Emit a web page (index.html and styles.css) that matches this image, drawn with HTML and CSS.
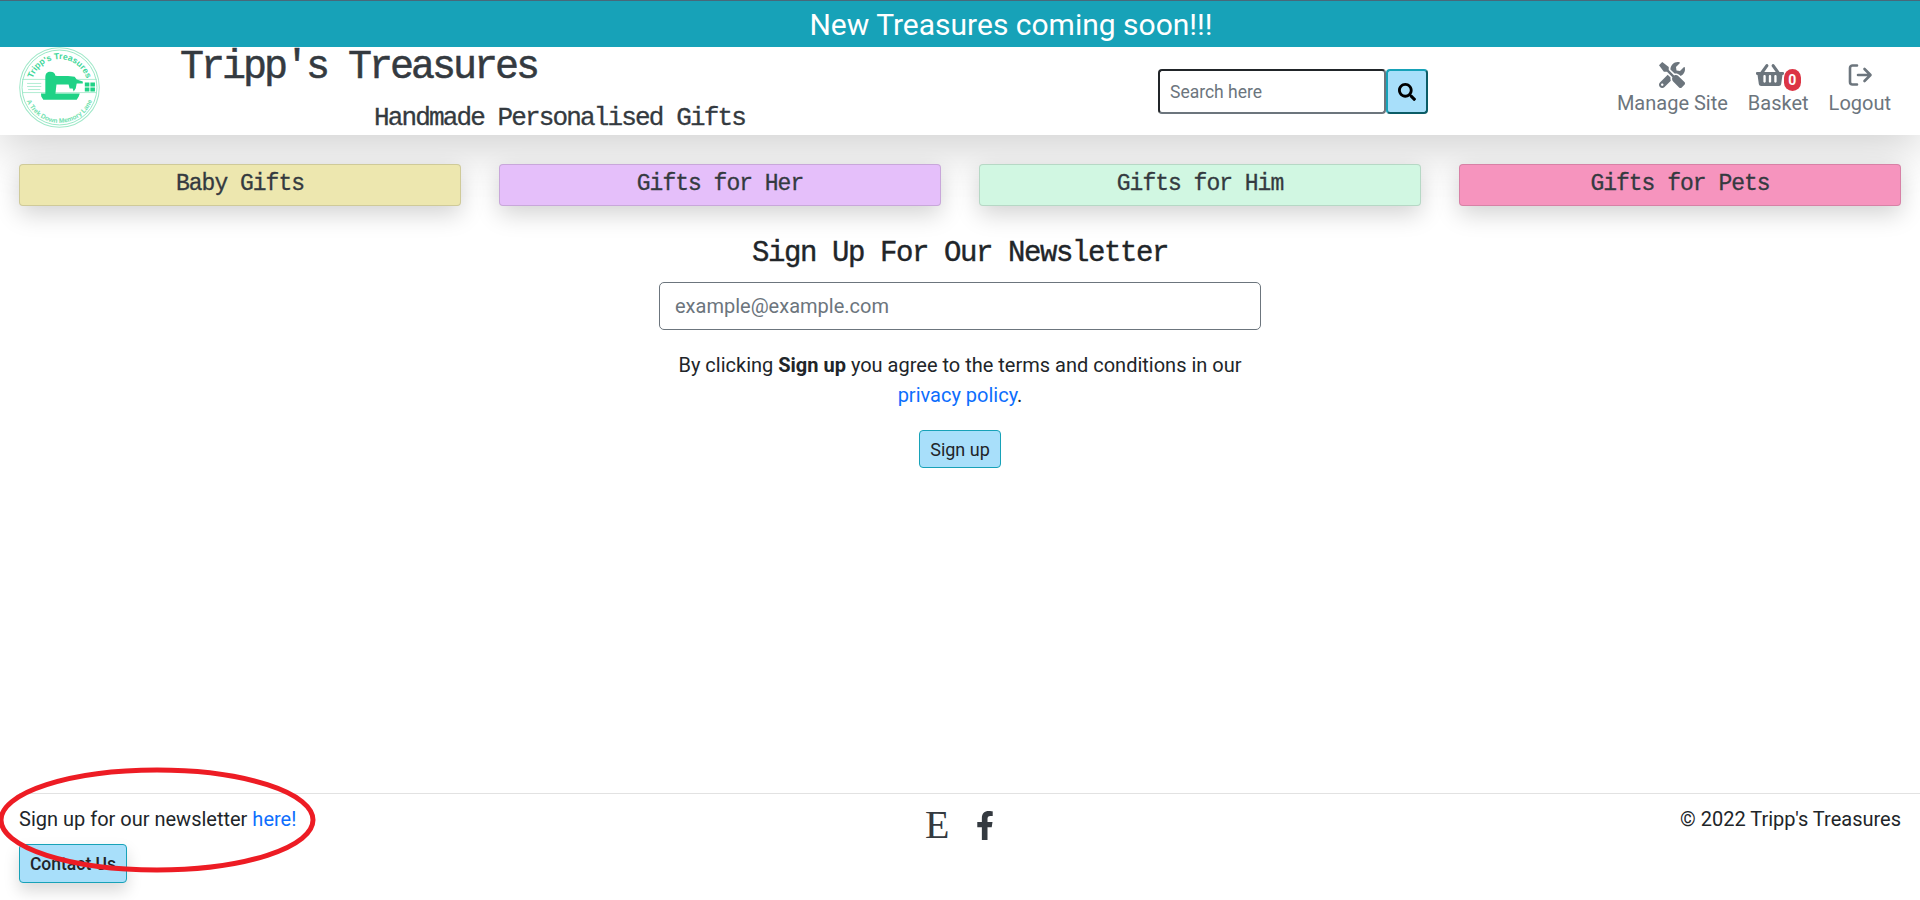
FILE: index.html
```html
<!DOCTYPE html>
<html lang="en">
<head>
    <meta charset="UTF-8">
    <title>Tripp's Treasures</title>
    <link rel="stylesheet" href="styles.css">
</head>
<body>

<div class="banner">New Treasures coming soon!!!</div>

<header class="header">
    <svg class="logo" viewBox="0 0 80 80">
        <defs>
            <path id="arc-top" d="M12 40a28 28 0 0 1 56 0"/>
            <path id="arc-bottom" d="M5 40a35 35 0 0 0 70 0"/>
        </defs>
        <circle cx="40" cy="40" r="39.3" fill="none" stroke="#9fe8c8" stroke-width="1"/>
        <circle cx="40" cy="40" r="37" fill="none" stroke="#7fe3b8" stroke-width="0.8"/>
        <path d="M3 32h74M3 45h74" stroke="#9fe8c8" stroke-width="0.8"/>
        <text class="logo-text"><textPath href="#arc-top" startOffset="50%" text-anchor="middle">Tripp's Treasures</textPath></text>
        <text class="logo-text logo-text-small"><textPath href="#arc-bottom" startOffset="50%" text-anchor="middle">A Trek Down Memory Lane</textPath></text>
        <path fill="#1fd286" d="M26 46V30c0-4 2-5.500 5-5.500 3 0 4.500 1.500 5 4 6 .5 14-.5 19 1l2 2.500 6 2v2h-6l-1 5-2 3-1-3h-3l-1-4H37l-1 9h24l-1 3-2 3H24l-2-3-.3-3z"/>
        <path d="M8 36h14M8 39h14M9 42h12" stroke="#9fe8c8" stroke-width="0.8"/>
        <path fill="#1fd286" d="M65 35h4.500v4H65zM70.500 35H75v4h-4.500zM65 40h4.500v4H65zM70.500 40H75v4h-4.500z"/>
    </svg>
    <div class="brand">
        <h1>Tripp's Treasures</h1>
        <p>Handmade Personalised Gifts</p>
    </div>
    <form class="search">
        <input type="text" placeholder="Search here">
        <button type="button">
            <svg viewBox="0 0 512 512"><path d="M505 442.700L405.300 343c-4.500-4.500-10.600-7-17-7H372c27.600-35.300 44-79.700 44-128C416 93.100 322.900 0 208 0S0 93.100 0 208s93.100 208 208 208c48.300 0 92.700-16.400 128-44v16.300c0 6.400 2.500 12.500 7 17l99.700 99.700c9.400 9.400 24.600 9.400 33.900 0l28.300-28.300c9.400-9.400 9.400-24.600.1-34zM208 336c-70.700 0-128-57.200-128-128 0-70.700 57.200-128 128-128 70.700 0 128 57.200 128 128 0 70.700-57.200 128-128 128z"/></svg>
        </button>
    </form>
    <nav class="nav">
        <a class="nav-item">
            <span class="nav-icon">
                <svg viewBox="0 0 512 512"><path d="M501.100 395.700L384 278.600c-23.100-23.100-57.600-27.600-85.400-13.900L192 158.100V96L64 0 0 64l96 128h62.100l106.600 106.600c-13.600 27.800-9.200 62.300 13.900 85.400l117.100 117.100c14.600 14.600 38.200 14.600 52.700 0l52.700-52.700c14.500-14.600 14.500-38.200 0-52.700zM331.700 225c28.300 0 54.900 11 74.900 31l19.400 19.400c15.800-6.900 30.800-16.500 43.800-29.500 37.100-37.100 49.700-89.300 37.900-136.700-2.200-9-13.500-12.100-20.100-5.500l-74.400 74.400-67.900-11.300L334 98.900l74.400-74.400c6.600-6.600 3.400-17.900-5.700-20.200-47.400-11.700-99.600.9-136.600 37.900-28.500 28.500-41.900 66.100-41.200 103.600l82.100 82.100c8.100-1.900 16.500-2.900 24.700-2.900zm-103.900 82l-56.700-56.700L18.700 402.800c-25 25-25 65.500 0 90.500s65.500 25 90.500 0l123.600-123.600c-7.600-19.900-9.900-41.600-5-62.700zM64 472c-13.200 0-24-10.800-24-24 0-13.300 10.700-24 24-24s24 10.700 24 24c0 13.200-10.700 24-24 24z"/></svg>
            </span>
            Manage Site
        </a>
        <a class="nav-item">
            <span class="nav-icon">
                <svg viewBox="0 0 576 512"><path d="M576 216v16c0 13.255-10.745 24-24 24h-8l-26.113 182.788C514.509 462.435 494.257 480 470.370 480H105.630c-23.887 0-44.139-17.565-47.518-41.212L32 256h-8c-13.255 0-24-10.745-24-24v-16c0-13.255 10.745-24 24-24h67.341l106.780-146.821c10.395-14.292 30.407-17.453 44.701-7.058 14.293 10.395 17.453 30.408 7.058 44.701L170.477 192h235.046L326.120 82.821c-10.395-14.292-7.234-34.306 7.059-44.701 14.291-10.395 34.306-7.235 44.701 7.058L484.659 192H552c13.255 0 24 10.745 24 24zM312 392V280c0-13.255-10.745-24-24-24s-24 10.745-24 24v112c0 13.255 10.745 24 24 24s24-10.745 24-24zm112 0V280c0-13.255-10.745-24-24-24s-24 10.745-24 24v112c0 13.255 10.745 24 24 24s24-10.745 24-24zm-224 0V280c0-13.255-10.745-24-24-24s-24 10.745-24 24v112c0 13.255 10.745 24 24 24s24-10.745 24-24z"/></svg>
                <span class="badge">0</span>
            </span>
            Basket
        </a>
        <a class="nav-item">
            <span class="nav-icon">
                <svg viewBox="0 0 26 26" class="icon-stroke"><path d="M10 3.500H5.500a2.500 2.500 0 0 0-2.500 2.500v14a2.500 2.500 0 0 0 2.500 2.500H10M11 13h12M17.500 7l6 6-6 6"/></svg>
            </span>
            Logout
        </a>
    </nav>
</header>

<div class="categories">
    <a class="cat cat-baby">Baby Gifts</a>
    <a class="cat cat-her">Gifts for Her</a>
    <a class="cat cat-him">Gifts for Him</a>
    <a class="cat cat-pets">Gifts for Pets</a>
</div>

<main class="main">
    <h2>Sign Up For Our Newsletter</h2>
    <input class="email" type="text" placeholder="example@example.com">
    <p>By clicking <b>Sign up</b> you agree to the terms and conditions in our <a href="#">privacy policy</a>.</p>
    <button class="btn" type="button">Sign up</button>
</main>

<footer class="footer">
    <div class="footer-left">
        <div>Sign up for our newsletter <a href="#">here!</a></div>
        <button class="btn btn-contact" type="button">Contact Us</button>
    </div>
    <div class="social">
        <span class="etsy">E</span>
        <svg viewBox="0 0 320 512"><path d="M279.140 288l14.220-92.660h-88.910v-60.130c0-25.350 12.420-50.060 52.240-50.060h40.420V6.260S260.430 0 225.360 0c-73.220 0-121.080 44.380-121.080 124.720v70.620H22.890V288h81.390v224h100.170V288z"/></svg>
    </div>
    <div class="copy">© 2022 Tripp's Treasures</div>
</footer>

<svg class="circled" viewBox="0 0 320 110">
    <ellipse cx="157" cy="55" rx="156" ry="50"/>
</svg>

</body>
</html>
```

FILE: styles.css
```css
* {
    box-sizing: border-box;
}

html, body {
    height: 900px;
    overflow: hidden;
}

body {
    margin: 0;
    font-family: Roboto, sans-serif;
    font-size: 20px;
    color: #212529;
    background-color: #fff;
    display: flex;
    flex-direction: column;
    position: relative;
}

a {
    color: #0d6efd;
    text-decoration: none;
}

.banner {
    height: 47px;
    flex: none;
    background-color: #17a2b8;
    border-top: 1px solid #47687a;
    color: #fff;
    font-size: 30px;
    line-height: 48px;
    text-align: center;
    padding-left: 102px;
    position: relative;
    z-index: 3;
}

.header {
    height: 88px;
    flex: none;
    display: flex;
    align-items: flex-start;
    padding: 0 29px 0 19px;
    background: #fff;
    box-shadow: 0 16px 48px rgba(0,0,0,0.175);
    position: relative;
    z-index: 2;
}

.logo {
    width: 81px;
    height: 81px;
    flex: none;
}

.logo-text {
    font-family: "Liberation Sans", sans-serif;
    font-size: 8.500px;
    font-weight: bold;
    fill: #3fd79a;
}

.logo-text-small {
    font-size: 6.500px;
    fill: #6fdfae;
}

.brand {
    width: 565px;
    margin-left: 80px;
    flex: none;
}

.brand h1 {
    margin: 0;
    font-family: "Liberation Mono", monospace;
    font-weight: normal;
    font-size: 40px;
    letter-spacing: -3px;
    line-height: 42px;
    color: #343a40;
    -webkit-text-stroke: 0.5px #343a40;
}

.brand p {
    margin: 15px 0 0;
    font-family: "Liberation Mono", monospace;
    font-size: 26px;
    letter-spacing: -1.860px;
    line-height: 28px;
    color: #343a40;
    text-align: right;
    -webkit-text-stroke: 0.3px #343a40;
}

.search {
    display: flex;
    margin: 22px 0 0 413px;
}

.search input {
    width: 228px;
    height: 45px;
    padding: 0 10px;
    font-family: Roboto, sans-serif;
    font-size: 17.500px;
    border: 2px solid #212529;
    border-bottom-color: #6c757d;
    border-right-color: #6c757d;
    border-radius: 4px;
}

.search input::placeholder {
    color: #6c757d;
}

.search button {
    width: 42px;
    height: 45px;
    padding: 0;
    background-color: #a8dffa;
    border: 2px solid #17a2b8;
    border-bottom-color: #0b5c66;
    border-right-color: #0b5c66;
    border-radius: 4px;
}

.search button svg {
    width: 18px;
    height: 18px;
    display: block;
    margin: 0 auto;
}

.nav {
    margin-left: auto;
    display: flex;
    gap: 20px;
    padding-top: 15px;
}

.nav-item {
    display: flex;
    flex-direction: column;
    align-items: center;
    color: #6c757d;
    font-size: 20px;
    line-height: 30px;
}

.nav-icon {
    display: flex;
    align-items: flex-start;
    height: 26px;
}

.nav-icon svg {
    height: 26px;
    width: 28px;
    fill: #6c757d;
}

.icon-stroke {
    fill: none !important;
    stroke: #6c757d;
    stroke-width: 2.600;
    stroke-linecap: round;
    stroke-linejoin: round;
}

.badge {
    width: 17px;
    height: 22px;
    margin-top: 7px;
    border-radius: 9px;
    background-color: #dc3545;
    color: #fff;
    font-size: 14px;
    font-weight: 700;
    line-height: 22px;
    text-align: center;
}

.categories {
    flex: none;
    display: grid;
    grid-template-columns: repeat(4, 1fr);
    gap: 38px;
    padding: 29px 19px 0;
    position: relative;
    z-index: 3;
}

.cat {
    height: 42px;
    border: 1px solid rgba(0,0,0,0.125);
    border-radius: 4px;
    font-family: "Liberation Mono", monospace;
    font-size: 23px;
    letter-spacing: -1px;
    line-height: 38px;
    color: #343a40;
    text-align: center;
    box-shadow: 0 8px 24px rgba(0,0,0,0.18);
    -webkit-text-stroke: 0.3px #343a40;
}

.cat-baby { background-color: #ede7af; }
.cat-her { background-color: #e5bffa; }
.cat-him { background-color: #d1f7e2; }
.cat-pets { background-color: #f694be; }

.main {
    flex: 1;
    display: flex;
    flex-direction: column;
    align-items: center;
    text-align: center;
}

.main h2 {
    margin: 28px 0 0;
    font-family: "Liberation Mono", monospace;
    font-weight: normal;
    font-size: 29px;
    letter-spacing: -1.400px;
    line-height: 40px;
    color: #212529;
    -webkit-text-stroke: 0.4px #212529;
}

.email {
    width: 602px;
    height: 48px;
    margin-top: 8px;
    padding: 0 15px;
    font-family: Roboto, sans-serif;
    font-size: 20px;
    border: 1px solid #6c757d;
    border-radius: 5px;
}

.email::placeholder {
    color: #6c757d;
}

.main p {
    width: 602px;
    margin: 20px 0 0;
    line-height: 30px;
}

.btn {
    height: 38px;
    padding: 0 10px;
    margin-top: 20px;
    font-family: Roboto, sans-serif;
    font-size: 18px;
    color: #212529;
    background-color: #a8dffa;
    border: 1px solid #17a2b8;
    border-radius: 4px;
}

.footer {
    flex: none;
    height: 107px;
    margin: 0 0 0 19px;
    padding-right: 19px;
    border-top: 1px solid #e2e2e2;
    display: flex;
    justify-content: space-between;
    padding-top: 10px;
    line-height: 30px;
    position: relative;
}

.footer-left .btn-contact {
    display: block;
    margin-top: 10px;
    width: 108px;
    height: 39px;
    padding: 0;
    font-size: 17.500px;
    font-weight: 500;
    box-shadow: 0 8px 16px rgba(0,0,0,0.15);
}

.social {
    position: absolute;
    left: 906px;
    top: 16px;
    display: flex;
    align-items: center;
    gap: 27px;
    color: #343a40;
}

.social svg {
    width: 18px;
    height: 29px;
    fill: #343a40;
}

.etsy {
    font-family: "Liberation Serif", serif;
    font-size: 40px;
    line-height: 30px;
}

.circled {
    position: absolute;
    left: 0;
    top: 765px;
    width: 320px;
    height: 110px;
    z-index: 3;
}

.circled ellipse {
    fill: none;
    stroke: #ed1c24;
    stroke-width: 5;
}
```
